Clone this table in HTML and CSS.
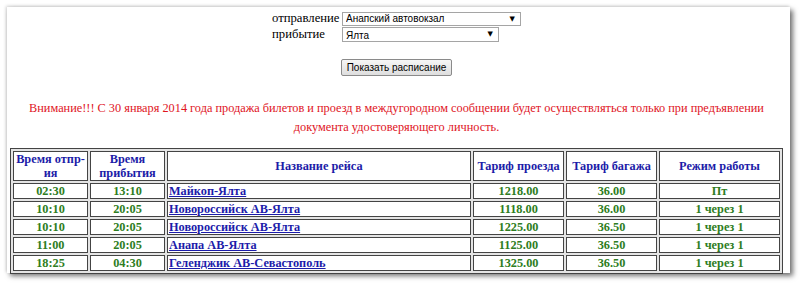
FILE: index.html
```html
<!DOCTYPE html>
<html lang="ru">
<head>
<meta charset="utf-8">
<title>Расписание</title>
<link rel="stylesheet" href="styles.css">
</head>
<body>
<div class="frame">
  <form class="search">
    <div class="fields">
      <label class="lbl" for="from">отправление</label>
      <span class="sel sel-from"><select id="from"><option>Анапский автовокзал</option></select></span>
      <label class="lbl" for="to">прибытие</label>
      <span class="sel sel-to"><select id="to"><option>Ялта</option></select></span>
    </div>
    <button type="button" class="btn">Показать расписание</button>
  </form>
  <p class="notice">Внимание!!! С 30 января 2014 года продажа билетов и проезд в междугородном сообщении будет осуществляться только при предъявлении документа удостоверяющего личность.</p>
  <table class="sched">
    <thead>
      <tr>
        <th class="c1">Время отпр-ия</th>
        <th class="c2">Время прибытия</th>
        <th class="c3">Название рейса</th>
        <th class="c4">Тариф проезда</th>
        <th class="c5">Тариф багажа</th>
        <th class="c6">Режим работы</th>
      </tr>
    </thead>
    <tbody>
      <tr><td>02:30</td><td>13:10</td><td class="name"><a href="#">Майкоп-Ялта</a></td><td>1218.00</td><td>36.00</td><td>Пт</td></tr>
      <tr><td>10:10</td><td>20:05</td><td class="name"><a href="#">Новороссийск АВ-Ялта</a></td><td>1118.00</td><td>36.00</td><td>1 через 1</td></tr>
      <tr><td>10:10</td><td>20:05</td><td class="name"><a href="#">Новороссийск АВ-Ялта</a></td><td>1225.00</td><td>36.50</td><td>1 через 1</td></tr>
      <tr><td>11:00</td><td>20:05</td><td class="name"><a href="#">Анапа АВ-Ялта</a></td><td>1125.00</td><td>36.50</td><td>1 через 1</td></tr>
      <tr><td>18:25</td><td>04:30</td><td class="name"><a href="#">Геленджик АВ-Севастополь</a></td><td>1325.00</td><td>36.50</td><td>1 через 1</td></tr>
    </tbody>
  </table>
</div>
</body>
</html>
```
FILE: styles.css
```css
html, body {
  margin: 0;
  padding: 0;
  background: #fff;
}
body {
  font-family: "Liberation Serif", "Times New Roman", serif;
  width: 800px;
  height: 286px;
  overflow: hidden;
}
.frame {
  margin: 7px 0 0 7px;
  width: 783px;
  height: 266px;
  box-sizing: border-box;
  padding: 4px 7px 0 3px;
  background: #fff;
  box-shadow: 3px 3px 5px rgba(0,0,0,0.55), -1px -1px 3px rgba(0,0,0,0.18);
}
.search {
  display: flex;
  flex-direction: column;
  align-items: center;
  margin: 0;
}
.fields {
  display: grid;
  grid-template-columns: 70px 179px;
  row-gap: 1px;
  align-items: center;
}
.lbl {
  font-size: 12.7px;
  color: #000;
  line-height: 15px;
  white-space: nowrap;
}
.sel {
  position: relative;
  display: block;
  height: 15px;
  box-sizing: border-box;
  border: 1px solid #a5a5a5;
  background: #fff;
  overflow: hidden;
}
.sel-from { width: 179px; height: 14px; }
.sel-to { width: 157px; }
.sel select {
  appearance: none;
  -webkit-appearance: none;
  display: block;
  box-sizing: border-box;
  border: 0;
  background: transparent;
  margin: -2px 0 0 0;
  padding: 0 0 0 3px;
  width: 100%;
  height: 16px;
  font-family: "Liberation Sans", Arial, sans-serif;
  font-size: 10px;
  color: #000;
  outline: none;
}
.sel-to select { margin-top: -1px; }
.sel::after {
  content: "▼";
  position: absolute;
  right: 5px;
  top: 0;
  font-family: "DejaVu Sans", sans-serif;
  font-size: 7px;
  line-height: 12px;
  color: #000;
  pointer-events: none;
}
.btn {
  margin-top: 17px;
  height: 17px;
  padding: 0 5px;
  border: 1px solid #8a8a8a;
  border-radius: 2px;
  background: linear-gradient(#f6f6f6, #dedede);
  font-family: "Liberation Sans", Arial, sans-serif;
  font-size: 10px;
  line-height: 15px;
  color: #000;
}
.notice {
  margin: 23px 0 0 0;
  text-align: center;
  color: #e0141e;
  font-size: 12.3px;
  line-height: 19px;
}
.sched {
  margin-top: 11px;
  width: 773px;
  table-layout: fixed;
  border-collapse: separate;
  border-spacing: 2px;
  border: 1px solid #444;
  background: #e4e4e4;
  font-size: 12.3px;
  font-weight: bold;
}
.sched th, .sched td {
  box-sizing: border-box;
  border: 1px solid #444;
  background: #fff;
  text-align: center;
  padding: 0 1px;
}
.sched th {
  color: #1c1ca8;
  height: 29px;
  line-height: 14px;
}
.sched td {
  color: #2e7d22;
  height: 16px;
  line-height: 14px;
}
.sched td.name {
  text-align: left;
}
.sched a {
  color: #1c1caa;
  text-decoration: underline;
}
.c1 { width: 75px; }
.c2 { width: 75px; }
.c3 { width: 304px; }
.c4 { width: 91px; }
.c5 { width: 91px; }
.c6 { width: 121px; }
```
